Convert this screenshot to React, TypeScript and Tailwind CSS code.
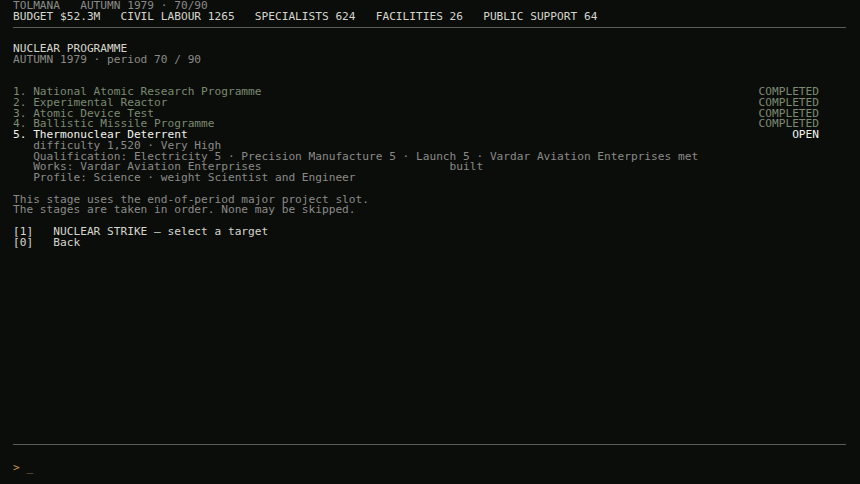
import React from 'react';

const stages = [
  { n: 1, name: 'National Atomic Research Programme', status: 'COMPLETED' },
  { n: 2, name: 'Experimental Reactor', status: 'COMPLETED' },
  { n: 3, name: 'Atomic Device Test', status: 'COMPLETED' },
  { n: 4, name: 'Ballistic Missile Programme', status: 'COMPLETED' },
];

const Line: React.FC<{ className?: string; children?: React.ReactNode }> = ({ className = '', children }) => (
  <div className={`h-[10.75px] whitespace-pre ${className}`}>{children}</div>
);

const Rule = () => (
  <div className="flex h-[10.75px] items-center">
    <div className="h-px w-full bg-[#5c5c5a]" />
  </div>
);

export default function App() {
  return (
    <div
      className="flex h-[484px] w-[860px] flex-col overflow-hidden bg-[#0b0d0b] pl-[13px] pr-[14px] pt-px text-[11.16px] leading-[10.75px] text-[#d6d6cc]"
      style={{ fontFamily: '"DejaVu Sans Mono", "Liberation Mono", monospace' }}
    >
      <Line className="text-[#8a8a86]">TOLMANA   AUTUMN 1979 · 70/90</Line>
      <Line>BUDGET $52.3M   CIVIL LABOUR 1265   SPECIALISTS 624   FACILITIES 26   PUBLIC SUPPORT 64</Line>
      <Rule />
      <Line />
      <Line>NUCLEAR PROGRAMME</Line>
      <Line className="text-[#8a8a86]">AUTUMN 1979 · period 70 / 90</Line>
      <Line />
      <Line />

      <div className="pr-[27px]">
        {stages.map((s) => (
          <div key={s.n} className="flex h-[10.75px] justify-between whitespace-pre text-[#7b8a70]">
            <span>{`${s.n}. ${s.name}`}</span>
            <span>{s.status}</span>
          </div>
        ))}
        <div className="flex h-[10.75px] justify-between whitespace-pre text-[#f2f2ea]">
          <span>5. Thermonuclear Deterrent</span>
          <span>OPEN</span>
        </div>
      </div>
      <div className="text-[#8a8a86]">
        <Line>   difficulty 1,520 · Very High</Line>
        <Line>   Qualification: Electricity 5 · Precision Manufacture 5 · Launch 5 · Vardar Aviation Enterprises met</Line>
        <Line>{'   Works: Vardar Aviation Enterprises                            built'}</Line>
        <Line>   Profile: Science · weight Scientist and Engineer</Line>
      </div>
      <Line />
      <Line className="text-[#8a8a86]">This stage uses the end-of-period major project slot.</Line>
      <Line className="text-[#8a8a86]">The stages are taken in order. None may be skipped.</Line>
      <Line />
      <Line>[1]   NUCLEAR STRIKE — select a target</Line>
      <Line>[0]   Back</Line>

      <div className="flex-1" />
      <div className="mb-[10px]">
        <Rule />
        <div className="h-[13px]" />
        <Line>
          <span className="text-[#c89a5a]">&gt;</span> <span className="text-[#a08660]">_</span>
        </Line>
      </div>
    </div>
  );
}
